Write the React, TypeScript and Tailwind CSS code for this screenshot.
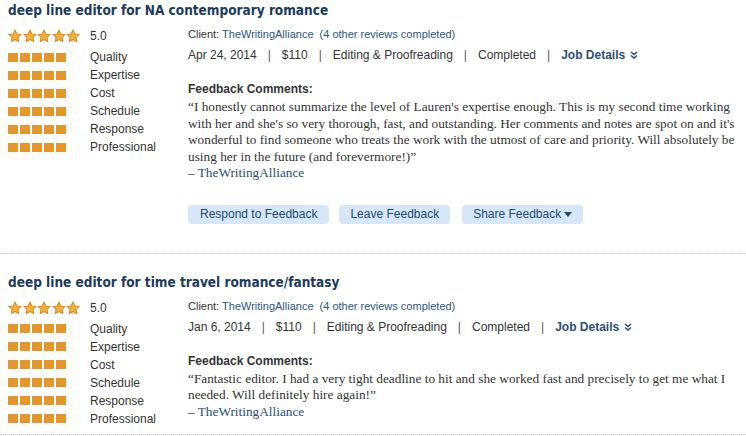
import React from "react";

type Review = {
  title: string;
  date: string;
  quote: string[];
  showActions: boolean;
};

const reviews: Review[] = [
  {
    title: "deep line editor for NA contemporary romance",
    date: "Apr 24, 2014",
    quote: [
      "“I honestly cannot summarize the level of Lauren's expertise enough. This is my second time working",
      "with her and she's so very thorough, fast, and outstanding. Her comments and notes are spot on and it's",
      "wonderful to find someone who treats the work with the utmost of care and priority. Will absolutely be",
      "using her in the future (and forevermore!)”",
    ],
    showActions: true,
  },
  {
    title: "deep line editor for time travel romance/fantasy",
    date: "Jan 6, 2014",
    quote: [
      "“Fantastic editor. I had a very tight deadline to hit and she worked fast and precisely to get me what I",
      "needed. Will definitely hire again!”",
    ],
    showActions: false,
  },
];

const criteria = ["Quality", "Expertise", "Cost", "Schedule", "Response", "Professional"];

function Star() {
  return (
    <svg width="14" height="14" viewBox="0 0 24 24">
      <path
        d="M12 1.8l3.1 6.6 7.2.9-5.3 5 1.4 7.1L12 17.9l-6.4 3.5 1.4-7.1-5.3-5 7.2-.9z"
        fill="#f4b23c"
        stroke="#d98a1c"
        strokeWidth="1.8"
        strokeLinejoin="round"
      />
    </svg>
  );
}

function DoubleChevron() {
  return (
    <svg width="8" height="8" viewBox="0 0 8 8" className="ml-[5px]">
      <path d="M1 1l3 2.5L7 1M1 4.5l3 2.5 3-2.5" fill="none" stroke="#2d4f74" strokeWidth="1.6" />
    </svg>
  );
}

function Sep() {
  return <span className="mx-[11px] text-[#555]">|</span>;
}

function ReviewItem({ review, first }: { review: Review; first: boolean }) {
  return (
    <section
      className={
        "border-b border-dotted border-[#c8c8c8] px-2 " +
        (first ? "pt-[2px] pb-[29px]" : "pt-[20px] pb-[6px]")
      }
    >
      <h2 className="text-[13.5px] leading-[17px] font-bold text-[#1c3a5e] font-['DejaVu_Sans_Condensed','DejaVu_Sans',sans-serif]">
        {review.title}
      </h2>
      <div className="flex mt-[8px]">
        <div className="w-[180px] shrink-0">
          <div className="flex items-center h-[21px] pb-[3px]">
            <div className="flex gap-[0.5px] w-[82px]">
              {[0, 1, 2, 3, 4].map((i) => (
                <Star key={i} />
              ))}
            </div>
            <span className="text-[12px] text-[#333]">5.0</span>
          </div>
          {criteria.map((c) => (
            <div key={c} className="flex items-center h-[18px]">
              <div className="flex gap-[2px] w-[82px]">
                {[0, 1, 2, 3, 4].map((i) => (
                  <span key={i} className="block w-[10px] h-[9px] bg-[#e5962a]" />
                ))}
              </div>
              <span className="text-[12px] text-[#333]">{c}</span>
            </div>
          ))}
        </div>
        <div className="flex-1 text-[#333]">
          <div className="text-[11px] leading-[14px] h-[14px]">
            Client: <span className="text-[#2a5585]">TheWritingAlliance</span>
            <span className="text-[#2a5585] ml-[6px]">(4 other reviews completed)</span>
          </div>
          <div className="flex items-center text-[12px] leading-[14px] mt-[7px]">
            <span>{review.date}</span>
            <Sep />
            <span>$110</span>
            <Sep />
            <span>Editing &amp; Proofreading</span>
            <Sep />
            <span>Completed</span>
            <Sep />
            <span className="font-bold text-[#2d4f74]">Job Details</span>
            <DoubleChevron />
          </div>
          <div className="text-[12px] leading-[14px] font-bold mt-[20px]">Feedback Comments:</div>
          <div className="font-['Liberation_Serif',serif] text-[13.3px] leading-[16.5px] text-[#333] mt-[3px] whitespace-nowrap">
            {review.quote.map((l) => (
              <div key={l}>{l}</div>
            ))}
            <div>
              – <span className="text-[#2a4e78]">TheWritingAlliance</span>
            </div>
          </div>
          {review.showActions && (
            <div className="flex mt-[23px] text-[12px] text-[#24496f]">
              <span className="bg-[#d6e8f8] rounded-[4px] h-[19px] leading-[19px] px-[12px]">
                Respond to Feedback
              </span>
              <span className="bg-[#d6e8f8] rounded-[4px] h-[19px] leading-[19px] px-[11px] ml-[10px]">
                Leave Feedback
              </span>
              <span className="bg-[#d6e8f8] rounded-[4px] h-[19px] leading-[19px] px-[11px] ml-[12px] flex items-center">
                Share Feedback
                <svg width="8" height="5" viewBox="0 0 8 5" className="ml-[3px]">
                  <path d="M0 0h8L4 5z" fill="#24496f" />
                </svg>
              </span>
            </div>
          )}
        </div>
      </div>
    </section>
  );
}

export default function App() {
  return (
    <main className="w-[746px] h-[436px] overflow-hidden bg-white font-['Liberation_Sans',Arial,sans-serif]">
      {reviews.map((r, i) => (
        <ReviewItem key={r.title} review={r} first={i === 0} />
      ))}
    </main>
  );
}
